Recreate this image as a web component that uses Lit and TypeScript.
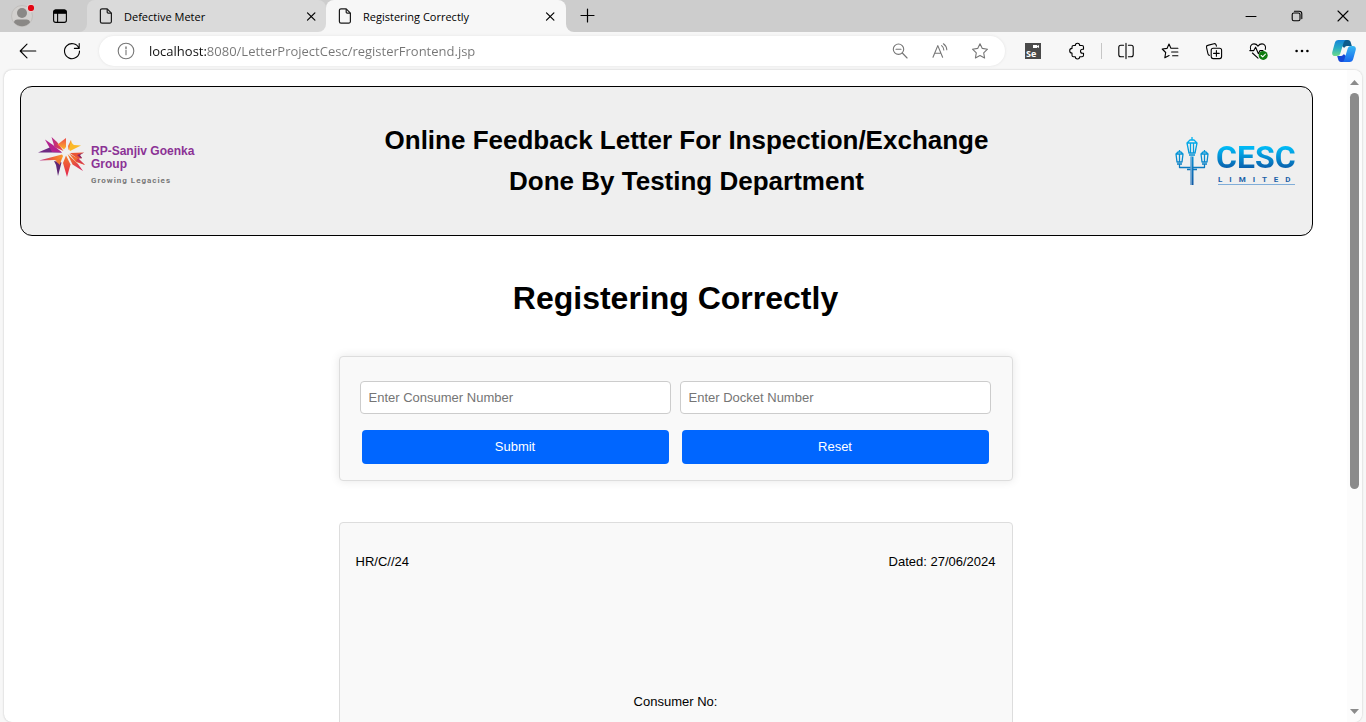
import { LitElement, html, css, svg } from "lit";
import { customElement, property, state } from "lit/decorators.js";

const fileIcon = html`<svg class="file" width="14" height="16" viewBox="0 0 14 16" fill="none" stroke="#1b1b1b" stroke-width="1.2" stroke-linejoin="round" aria-hidden="true">
  <path d="M3 .8h5.2l4.2 4.4v8.3a1.6 1.6 0 0 1-1.6 1.6H3a1.6 1.6 0 0 1-1.6-1.6V2.4A1.6 1.6 0 0 1 3 .8z" /><path d="M8.2.9v3.2c0 .7.4 1.1 1.1 1.1h3" />
</svg>`;

const icons: Record<string, unknown> = {
  workspace: svg`<rect x="3.6" y="4" width="12.8" height="12.4" rx="2.2"/><path d="M4 5.6c0-.9.7-1.6 1.6-1.6h8.8c.9 0 1.6.7 1.6 1.6v1.6H4z" fill="currentColor"/><path d="M7.6 7v9.4"/>`,
  back: svg`<path d="M2.4 10h15.4M9 3.2 2.2 10 9 16.8"/>`,
  refresh: svg`<path d="M16.9 7.2A7.5 7.5 0 1 0 17.5 10M17.2 2.6v4.8h-4.8"/>`,
  info: svg`<circle cx="10" cy="10" r="7.8"/><path d="M10 9v4.8"/><path d="M10 6v1.4" stroke-width="1.4"/>`,
  zoomOut: svg`<circle cx="8.5" cy="8.2" r="5.2"/><path d="m12.3 12 4.8 5M6 8.2h5"/>`,
  readAloud: svg`<path d="M3 16.2 7.8 4.6 12.6 16.2M4.6 12.3H11M11.6 4.6a5.2 5.2 0 0 1 2.2 4.3M13.4 2.8a8 8 0 0 1 3.4 6"/>`,
  star: svg`<path d="m10 2.7 2.3 4.7 5.2.8-3.8 3.7.9 5.1-4.6-2.4L5.4 17l.9-5.1-3.8-3.7 5.2-.8z"/>`,
  puzzle: svg`<path d="M5 7.400V6c0-.9.6-1.500 1.500-1.500h1.800a2.200 2.200 0 0 1 4.400 0h2.300c.9 0 1.500.6 1.500 1.500v2.200h-1a2 2 0 0 0 0 4h1v2.100c0 .9-.6 1.500-1.500 1.500h-2.300a2.200 2.200 0 0 1-4.400 0H6.500c-.9 0-1.500-.6-1.500-1.500v-2.300a2.300 2.300 0 0 1 0-4.600z"/>`,
  split: svg`<path d="M7.6 4.2H4.8c-1.2 0-2 .8-2 2v7.600c0 1.200.8 2 2 2h2.800M12.400 4.200h2.800c1.200 0 2 .8 2 2v7.600c0 1.200-.8 2-2 2h-2.800M10 2.400v15.200"/>`,
  favorites: svg`<path d="M10.9 7.2 9 3 7 7.4l-4.8.6 3.5 3.5-.9 5.3 4.3-2.3M10.9 7.2h7M11.6 11h6.3M12.6 14.8h5.3"/>`,
  collections: svg`<rect x="7.2" y="7.2" width="10.4" height="10.4" rx="2"/><path d="M12.4 9.6v5.6M9.6 12.4h5.6M5.4 14.4c-.8-.2-1.2-.7-1.4-1.5L2.5 6.4c-.2-1 .2-1.8 1.2-2L10 2.7c1-.2 1.8.2 2.1 1.2l.3 1.2"/>`,
  essentials: svg`<path d="M2.600 8.400C1.600 5.400 3.400 2.900 6 2.900c1.700 0 3 .8 4 2.200 1-1.400 2.300-2.200 4-2.200 2.600 0 4.300 2.500 3.300 5.500M4.400 12 10 17.200M1.800 9.600h4l1.800-3.400 2.800 6.600 1.600-3.200h3"/><circle cx="15.200" cy="14.400" r="4.500" fill="#107c10" stroke="none"/><path d="m13.200 14.500 1.500 1.400 2.700-2.800" stroke="#fff"/>`,
  more: svg`<g fill="currentColor" stroke="none"><circle cx="4.6" cy="10" r="1.3"/><circle cx="10" cy="10" r="1.3"/><circle cx="15.4" cy="10" r="1.3"/></g>`,
  tabClose: svg`<path d="m6.500 6.800 7.400 7.400M13.900 6.800l-7.400 7.400" stroke-width="1.2"/>`,
  plus: svg`<path d="M9.500 3v13M3 9.500h13" stroke-width="1.2"/>`,
  minimize: svg`<path d="M5 10.5h10" stroke-width="1"/>`,
  restore: svg`<rect x="5.2" y="7" width="7.8" height="7.8" rx="1.6"/><path d="M7.4 5.2h4.8c1.6 0 2.6 1 2.6 2.6v4.8" />`,
  close: svg`<path d="m5 5 10 10M15 5 5 15"/>`,
};

@customElement("ui-icon")
class UiIcon extends LitElement {
  static styles = css`
    :host { display: block; }
    svg { display: block; }
  `;
  @property() name = "";
  render() {
    return html`<svg width="20" height="20" viewBox="0 0 20 20" fill="none" stroke="currentColor" stroke-width="1.1" stroke-linecap="round" stroke-linejoin="round" aria-hidden="true">${icons[this.name]}</svg>`;
  }
}

@customElement("rpsg-logo")
class RpsgLogo extends LitElement {
  static styles = css`
    :host { display: flex; width: 160px; gap: 5px; font-family: "Liberation Sans", Arial, sans-serif; font-weight: 700; }
    .burst { flex: none; }
    .words { padding-top: 8px; white-space: nowrap; }
    .name { font-size: 12px; line-height: 13px; color: #8b3295; }
    .motto { margin-top: 5px; font-family: Roboto, sans-serif; font-size: 8px; line-height: 10px; letter-spacing: 1px; color: #777; }
  `;
  render() {
    return html`
      <svg class="burst" width="48" height="41" viewBox="0 0 48 41" aria-hidden="true">
        <defs>
          <linearGradient id="a" x1="0" x2="1"><stop offset="0" stop-color="#b3238f" /><stop offset="1" stop-color="#ef4f3f" /></linearGradient>
          <linearGradient id="b" x1="0" x2="1"><stop offset="0" stop-color="#b32693" /><stop offset=".6" stop-color="#f06a35" /><stop offset="1" stop-color="#f9992b" /></linearGradient>
          <linearGradient id="c" x1="0" y1="0" x2="0" y2="1"><stop offset="0" stop-color="#ee4a4a" /><stop offset="1" stop-color="#fdb52a" /></linearGradient>
          <linearGradient id="d" x1="0" x2="1" y2="1"><stop offset="0" stop-color="#f58220" /><stop offset="1" stop-color="#d81e62" /></linearGradient>
          <linearGradient id="e" x1="0" y1="0" x2="0" y2="1"><stop offset="0" stop-color="#f47c2b" /><stop offset="1" stop-color="#e3204f" /></linearGradient>
        </defs>
        <path d="M0 15.500 14 9.500 24 15.500z" fill="#6f2a83" />
        <path d="M7 2.500 15 8l9 7.500-10-.5z" fill="#b3238f" />
        <path d="M13.500 0 19 5l6.500 9-9-4z" fill="url(#a)" />
        <path d="M28 1v9l-2 2.500-6.500-5z" fill="url(#c)" />
        <path d="M33 3v7l-2.500 3-.5-4z" fill="#f2793a" />
        <path d="M33 3c.5 3 1.500 4 3 5l7 .5L32 14l-1-2z" fill="#fbb928" />
        <path d="M46 15.500 32 16l8 6 4-1-3-3z" fill="#ea5534" />
        <path d="M46 15.500 39 18l4 3.500 1-.5-2-3z" fill="#8d2863" />
        <path d="M1 23.500 24 17.500l1 1.500-2.500 6.500-6-2.500z" fill="url(#b)" />
        <path d="m16 24 7.500 1.500L20 39l-2-11z" fill="#5f2674" />
        <path d="m23 21-5 3.500 4 3.500z" fill="#f07a30" />
        <path d="m28 18.500 4.500 9L29 40l-4-14z" fill="url(#e)" />
        <path d="m29.500 17 5 10.500L45 34l-5-7z" fill="url(#d)" />
        <path d="m31 16.500 7 8.500 9 3-8-7z" fill="#ef6a2c" />
        <path d="m38 24 9 4-7-7z" fill="#d63a50" />
      </svg>
      <div class="words">
        <div class="name">RP-Sanjiv Goenka<br />Group</div>
        <div class="motto">Growing Legacies</div>
      </div>
    `;
  }
}

@customElement("cesc-logo")
class CescLogo extends LitElement {
  static styles = css`
    :host { display: flex; width: 120px; gap: 7px; font-family: Roboto, sans-serif; font-weight: 700; }
    .lamp { flex: none; }
    .words { flex: 1; min-width: 0; padding-top: 1px; }
    .name { font-size: 32px; line-height: 38px; color: #0a86cc; background: linear-gradient(#00b9f5 25%, #0a55a4 85%); background-clip: text; -webkit-text-fill-color: transparent; }
    .sub { margin-left: 2px; font-size: 8px; line-height: 8px; letter-spacing: 7px; color: #1c62a8; white-space: nowrap; border-bottom: 1px solid #80add8; }
  `;
  render() {
    return html`
      <svg class="lamp" width="34" height="48" viewBox="0 0 34 48" fill="none" aria-hidden="true">
        <defs>
          <linearGradient id="g" x1="0" y1="0" x2="0" y2="48" gradientUnits="userSpaceOnUse"><stop offset="0" stop-color="#00b4f2" /><stop offset="1" stop-color="#1259a3" /></linearGradient>
        </defs>
        <g stroke="url(#g)" stroke-width="1.3" stroke-linejoin="round">
          <path d="M12 6h10l-2 10h-6zM12 6l3-3h4l3 3M17 0v3M15.5 6v10M18.5 6v10M14 18h6" />
          <path d="M1 17h7l-1 8H2zM1 17l2-2h3l2 2M4.500 13v2M4.500 17v8M2 27h5" />
          <path d="M26 17h7l-1 8h-5zM26 17l2-2h3l2 2M29.500 13v2M29.500 17v8M27 27h5" />
          <path d="M4.500 27v3.500h25V27M12 32.500h10" />
        </g>
        <path d="M15.500 19.500h3V48h-3z" fill="url(#g)" />
        <path d="M15.500 19.500h1.200V48h-1.200z" fill="#8bb5da" />
      </svg>
      <div class="words">
        <div class="name">CESC</div>
        <div class="sub">LIMITED</div>
      </div>
    `;
  }
}

@customElement("app-root")
class AppRoot extends LitElement {
  static styles = css`
    :host { display: flex; flex-direction: column; height: 100vh; overflow: hidden; background: #f7f7f7; color: #000; font-family: "Liberation Sans", Arial, sans-serif; }
    * { box-sizing: border-box; }
    button { font: inherit; color: inherit; border: 0; padding: 0; background: none; cursor: pointer; }
    .icon-btn { display: flex; align-items: center; justify-content: center; width: 44px; height: 32px; flex: none; }

    .tabstrip { display: flex; height: 32px; flex: none; font-family: "Open Sans", sans-serif; font-size: 11px; }
    .cell { display: flex; flex: none; }
    .cell.lead { background: linear-gradient(#cdcdcd 50%, #dadada 50%); }
    .cell.idle { background: linear-gradient(#cdcdcd 50%, #f7f7f7 50%); }
    .cell.current { background: #cdcdcd; }
    .cell.rest { flex: 1; background: #f7f7f7; }
    .lead-in { display: flex; align-items: center; width: 87px; background: #cdcdcd; border-radius: 0 0 8px 0; }
    .lead-in .profile { width: 44px; }
    .lead-in .spaces { width: 32px; }
    .tab { display: flex; align-items: center; width: 239px; padding: 0 5px 0 12px; background: #dadada; border-radius: 8px 8px 8px 0; }
    .current .tab { width: 240px; padding-right: 6px; background: #f7f7f7; border-radius: 8px 8px 0 0; }
    .tab-name { flex: 1; margin-left: 11px; text-align: left; white-space: nowrap; }
    .tab .icon-btn { width: 20px; }
    .rest-in { display: flex; flex: 1; justify-content: space-between; background: #cdcdcd; border-radius: 0 0 0 8px; }
    .window { display: flex; }
    .window .icon-btn { width: 46px; }

    .toolbar { display: flex; align-items: center; height: 38px; flex: none; padding: 0 2px 0 6px; }
    .address { display: flex; align-items: center; flex: 1; min-width: 0; height: 30px; margin: 0 6px 0 5px; padding: 0 5px 0 7px; border-radius: 15px; background: #fff; box-shadow: 0 0 3px #e2e2e2; color: #767676; }
    .address .icon-btn { width: 40px; height: 30px; }
    .address .site { border-radius: 15px; }
    .url { flex: 1; min-width: 0; border: 0; outline: 0; padding: 0; margin-left: 3px; font-family: "Open Sans", sans-serif; font-size: 13px; line-height: 20px; color: #6b6b6b; background: linear-gradient(90deg, #111 57px, #757575 57px); background-clip: text; -webkit-text-fill-color: transparent; }
    .divider { width: 1px; height: 16px; margin: 0 2px; background: #c6c6c6; }
    .copilot { width: 40px; }

    .frame { display: flex; flex: 1; min-height: 0; margin: 0 4px; border-radius: 8px; background: #fff; box-shadow: 0 0 2px #bbb; overflow: hidden; }
    .page { flex: 1; min-width: 0; overflow: hidden; }
    .banner { display: flex; align-items: center; height: 150px; margin: 16px 34px 0 16px; padding: 0 17px; border: 1px solid #000; border-radius: 12px; background: #efefef; }
    .banner-title { flex: 1; margin: 0; text-align: center; font-size: 26px; line-height: 41px; font-weight: 700; }
    .heading { margin: 44px 0 39px; text-align: center; font-size: 32px; line-height: 37px; }
    .panel { width: 674px; max-width: 100%; margin: 0 auto; border: 1px solid #ddd; border-radius: 4px; background: #f9f9f9; font-size: 13px; line-height: 16px; }
    .form { display: grid; grid-template-columns: 1fr 1fr; gap: 16px 9px; padding: 24px 21px 16px 20px; box-shadow: 0 0 10px rgba(0, 0, 0, 0.1); }
    .field { width: 100%; height: 33px; padding: 0 8px; border: 1px solid #ccc; border-radius: 4px; background: #fff; font: inherit; }
    .field::placeholder { color: #757575; }
    .action { height: 34px; margin: 0 2px; border-radius: 4px; background: #0066ff; color: #fff; }
    .letter { margin-top: 41px; padding: 31px 16px 40px; }
    .letter-top { display: flex; justify-content: space-between; }
    .letter-ref { margin: 124px 0 0; text-align: center; }

    .scrollbar { display: flex; flex-direction: column; align-items: center; width: 15px; padding: 10px 0 8px; background: #fcfcfc; }
    .track { flex: 1; width: 9px; margin: 8px 0 7px; }
    .thumb { height: 65%; border-radius: 5px; background: #8b8b8b; }
    .arrow { display: block; flex: none; fill: #8b8b8b; }
  `;

  @state() consumer = "";
  @state() docket = "";

  private iconButton(name: string, label: string) {
    return html`<button class="icon-btn" aria-label=${label}><ui-icon name=${name}></ui-icon></button>`;
  }

  private tab(title: string, cls: string) {
    return html`<div class="cell ${cls}"><div class="tab">${fileIcon}<span class="tab-name">${title}</span>${this.iconButton("tabClose", "Close tab")}</div></div>`;
  }

  private reset() {
    this.consumer = "";
    this.docket = "";
  }

  render() {
    return html`
      <div class="tabstrip">
        <div class="cell lead">
          <div class="lead-in">
            <button class="icon-btn profile" aria-label="Profile">
              <svg width="24" height="24" viewBox="0 0 24 24" aria-hidden="true">
                <circle cx="12" cy="12" r="10.500" fill="#d2d0ce" stroke="#c1bfbd" />
                <circle cx="12" cy="9" r="5" fill="#8a8886" />
                <path d="M4 18.500c0-2 1.500-3 3.500-3h9c2 0 3.500 1 3.500 3a10.500 10.500 0 0 1-16 0z" fill="#8a8886" />
                <circle cx="21" cy="4" r="3.800" fill="#e30613" stroke="#e8e8e8" />
              </svg>
            </button>
            <button class="icon-btn spaces" aria-label="Workspaces"><ui-icon name="workspace"></ui-icon></button>
          </div>
        </div>
        ${this.tab("Defective Meter", "idle")} ${this.tab("Registering Correctly", "current")}
        <div class="cell rest">
          <div class="rest-in">
            ${this.iconButton("plus", "New tab")}
            <div class="window">
              ${this.iconButton("minimize", "Minimize")} ${this.iconButton("restore", "Restore")} ${this.iconButton("close", "Close")}
            </div>
          </div>
        </div>
      </div>

      <div class="toolbar">
        ${this.iconButton("back", "Back")} ${this.iconButton("refresh", "Refresh")}
        <div class="address">
          ${this.iconButton("info", "Site information")}
          <input class="url" aria-label="Address" .value=${"localhost:8080/LetterProjectCesc/registerFrontend.jsp"} />
          ${this.iconButton("zoomOut", "Zoom")} ${this.iconButton("readAloud", "Read aloud")} ${this.iconButton("star", "Add to favorites")}
        </div>
        <button class="icon-btn" aria-label="Selenium IDE">
          <svg width="16" height="16" viewBox="0 0 16 16" aria-hidden="true">
            <path d="M0 0h16v16H0z" fill="#4a4a4a" />
            <path d="M8 2h4v1l2-1v3l-2-1v1H8z" fill="#fff" />
            <text x="1" y="14" font-family="Open Sans, sans-serif" font-size="9" font-weight="700" fill="#fff">Se</text>
          </svg>
        </button>
        ${this.iconButton("puzzle", "Extensions")}
        <span class="divider"></span>
        ${this.iconButton("split", "Split screen")} ${this.iconButton("favorites", "Favorites")}
        ${this.iconButton("collections", "Collections")} ${this.iconButton("essentials", "Browser essentials")}
        ${this.iconButton("more", "Settings and more")}
        <button class="icon-btn copilot" aria-label="Copilot">
          <svg width="24" height="22" viewBox="0 0 24 22" aria-hidden="true">
            <defs>
              <linearGradient id="l" x1="0" y1="0" x2="0" y2="1"><stop offset="0" stop-color="#1583d8" /><stop offset=".5" stop-color="#27acc4" /><stop offset="1" stop-color="#6ddb8b" /></linearGradient>
              <linearGradient id="r" x1="0" y1="0" x2="0" y2="1"><stop offset="0" stop-color="#38b8f2" /><stop offset="1" stop-color="#1767ee" /></linearGradient>
            </defs>
            <path d="M9 0h7c1.600 0 2.400 1 2.800 2.400L19.800 6H16c-2 0-3 .5-3.800 2L10 6z" fill="#0d5c8c" />
            <path d="M15 22H9c-1.600 0-2.400-1-2.800-2.400L5.200 16H8c2 0 3-.5 3.800-2L14 16z" fill="#1547d6" />
            <path d="M6.500 0H14c-1.500.5-2 1.500-2.500 3L8.300 13.500C7.800 15.200 6.500 16 5 16H3c-2.200 0-3.300-1.800-2.700-4L2.800 3C3.300 1.200 4.500 0 6.500 0z" fill="url(#l)" />
            <path d="M17.500 22H10c1.500-.5 2-1.500 2.500-3L15.700 8.500C16.200 6.800 17.500 6 19 6H21c2.200 0 3.300 1.800 2.700 4L21.200 19c-.5 1.800-1.700 3-3.700 3z" fill="url(#r)" />
          </svg>
        </button>
      </div>

      <div class="frame">
        <main class="page">
          <header class="banner">
            <rpsg-logo></rpsg-logo>
            <h2 class="banner-title">Online Feedback Letter For Inspection/Exchange<br />Done By Testing Department</h2>
            <cesc-logo></cesc-logo>
          </header>
          <h1 class="heading">Registering Correctly</h1>
          <form class="panel form" @submit=${(e: Event) => e.preventDefault()}>
            <input class="field" aria-label="Consumer number" placeholder="Enter Consumer Number" .value=${this.consumer} @input=${(e: Event) => (this.consumer = (e.target as HTMLInputElement).value)} />
            <input class="field" aria-label="Docket number" placeholder="Enter Docket Number" .value=${this.docket} @input=${(e: Event) => (this.docket = (e.target as HTMLInputElement).value)} />
            <button class="action" type="submit">Submit</button>
            <button class="action" type="button" @click=${this.reset}>Reset</button>
          </form>
          <section class="panel letter">
            <div class="letter-top"><span>HR/C//24</span><span>Dated: 27/06/2024</span></div>
            <p class="letter-ref">Consumer No:</p>
          </section>
        </main>
        <div class="scrollbar">
          <svg class="arrow" width="9" height="5" viewBox="0 0 9 5"><path d="M4.500 0 9 5H0z" /></svg>
          <div class="track"><div class="thumb"></div></div>
          <svg class="arrow" width="9" height="5" viewBox="0 0 9 5"><path d="M4.500 5 0 0h9z" /></svg>
        </div>
      </div>
    `;
  }
}
